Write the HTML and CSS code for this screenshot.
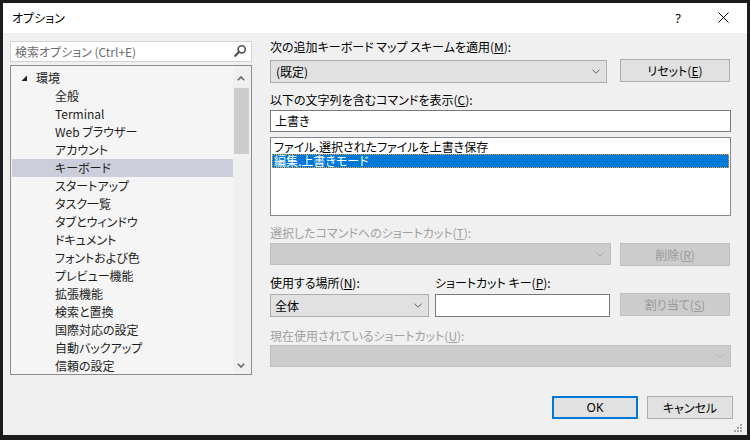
FILE: index.html
```html
<!DOCTYPE html>
<html lang="ja">
<head>
<meta charset="utf-8">
<title>オプション</title>
<link rel="stylesheet" href="styles.css">
</head>
<body>
<div class="window">
  <div class="titlebar">
    <span class="title">オプション</span>
    <span class="cap help">?</span>
    <span class="cap close">
      <svg width="11" height="11" viewBox="0 0 11 11"><path d="M0.5 0.5 L10.5 10.5 M10.5 0.5 L0.5 10.5" stroke="#000" stroke-width="1" fill="none"/></svg>
    </span>
  </div>
  <div class="content">
    <div class="left">
      <div class="search">
        <span class="placeholder">検索オプション (Ctrl+E)</span>
        <svg class="search-icon" width="14" height="14" viewBox="0 0 14 14">
          <circle cx="8.7" cy="5.3" r="3.6" stroke="#505050" stroke-width="1.6" fill="none"/>
          <path d="M6.2 7.8 L2.2 11.8" stroke="#505050" stroke-width="2.2" stroke-linecap="round"/>
        </svg>
      </div>
      <div class="tree">
        <div class="tree-items">
          <div class="row root">
            <svg class="expander" width="7" height="7" viewBox="0 0 7 7"><polygon points="6,0.5 6,6 0.5,6" fill="#1e1e1e"/></svg>
            <span>環境</span>
          </div>
          <div class="row child">全般</div>
          <div class="row child">Terminal</div>
          <div class="row child">Web ブラウザー</div>
          <div class="row child">アカウント</div>
          <div class="row child selected">キーボード</div>
          <div class="row child">スタートアップ</div>
          <div class="row child">タスク一覧</div>
          <div class="row child">タブとウィンドウ</div>
          <div class="row child">ドキュメント</div>
          <div class="row child">フォントおよび色</div>
          <div class="row child">プレビュー機能</div>
          <div class="row child">拡張機能</div>
          <div class="row child">検索と置換</div>
          <div class="row child">国際対応の設定</div>
          <div class="row child">自動バックアップ</div>
          <div class="row child">信頼の設定</div>
        </div>
        <div class="scrollbar">
          <div class="sb-btn sb-up">
            <svg width="8" height="5" viewBox="0 0 8 5"><path d="M0.8 4.2 L4 1 L7.2 4.2" stroke="#606060" stroke-width="1.5" fill="none"/></svg>
          </div>
          <div class="sb-thumb"></div>
          <div class="sb-track"></div>
          <div class="sb-btn sb-down">
            <svg width="8" height="5" viewBox="0 0 8 5"><path d="M0.8 0.8 L4 4 L7.2 0.8" stroke="#606060" stroke-width="1.5" fill="none"/></svg>
          </div>
        </div>
      </div>
    </div>

    <div class="right">
      <div class="label l1">次の追加キーボード マップ スキームを適用(<u>M</u>):</div>
      <div class="line r1">
        <div class="combo w337">
          <span>(既定)</span>
          <svg class="chev" width="8" height="5" viewBox="0 0 8 5"><path d="M0.5 0.8 L4 4.2 L7.5 0.8" stroke="#606060" stroke-width="1" fill="none"/></svg>
        </div>
        <div class="btn reset">リセット(<u>E</u>)</div>
      </div>

      <div class="label l2">以下の文字列を含むコマンドを表示(<u>C</u>):</div>
      <div class="textbox full">上書き</div>

      <div class="listbox">
        <div class="item">ファイル.選択されたファイルを上書き保存</div>
        <div class="item sel">編集.上書きモード</div>
      </div>

      <div class="label disabled l3">選択したコマンドへのショートカット(<u>T</u>):</div>
      <div class="line r3">
        <div class="combo dis w341">
          <span></span>
          <svg class="chev" width="8" height="5" viewBox="0 0 8 5"><path d="M0.5 0.8 L4 4.2 L7.5 0.8" stroke="#a8a8a8" stroke-width="1" fill="none"/></svg>
        </div>
        <div class="btn dis del">削除(<u>R</u>)</div>
      </div>

      <div class="labelrow">
        <div class="label lw">使用する場所(<u>N</u>):</div>
        <div class="label">ショートカット キー(<u>P</u>):</div>
      </div>
      <div class="line r4">
        <div class="combo w159">
          <span>全体</span>
          <svg class="chev" width="8" height="5" viewBox="0 0 8 5"><path d="M0.5 0.8 L4 4.2 L7.5 0.8" stroke="#606060" stroke-width="1" fill="none"/></svg>
        </div>
        <div class="textbox keybox"></div>
        <div class="btn dis assign">割り当て(<u>S</u>)</div>
      </div>

      <div class="label disabled l4">現在使用されているショートカット(<u>U</u>):</div>
      <div class="combo dis full w461">
        <span></span>
        <svg class="chev" width="8" height="5" viewBox="0 0 8 5"><path d="M0.5 0.8 L4 4.2 L7.5 0.8" stroke="#b4b4b4" stroke-width="1" fill="none"/></svg>
      </div>

      <div class="actions">
        <div class="btn ok">OK</div>
        <div class="btn cancel">キャンセル</div>
      </div>
    </div>
  </div>
  <svg class="grip" width="8" height="8" viewBox="0 0 8 8">
    <rect x="6" y="0" width="2" height="2" fill="#a6a6a6"/>
    <rect x="3" y="3" width="2" height="2" fill="#a6a6a6"/>
    <rect x="6" y="3" width="2" height="2" fill="#a6a6a6"/>
    <rect x="0" y="6" width="2" height="2" fill="#a6a6a6"/>
    <rect x="3" y="6" width="2" height="2" fill="#a6a6a6"/>
    <rect x="6" y="6" width="2" height="2" fill="#a6a6a6"/>
  </svg>
</div>
</body>
</html>
```

FILE: styles.css
```css
* {
  box-sizing: border-box;
}

html, body {
  margin: 0;
  padding: 0;
}

body {
  background: #1c1c1c;
  width: 750px;
  height: 440px;
  overflow: hidden;
  font-family: "Noto Sans CJK JP", "Noto Sans", sans-serif;
  font-size: 12px;
  font-feature-settings: "palt";
  color: #000;
}

u {
  text-decoration: underline;
  text-underline-offset: 1px;
}

.window {
  position: relative;
  margin: 3px 0 0 3px;
  width: 744px;
  height: 432px;
  background: #f0f0f0;
}

/* title bar */
.titlebar {
  height: 30px;
  background: #ffffff;
  display: flex;
  align-items: center;
  padding-left: 9px;
  padding-right: 1px;
}

.title {
  line-height: 14px;
  margin-top: -1px;
}

.cap {
  width: 46px;
  height: 30px;
  display: flex;
  align-items: center;
  justify-content: center;
}

.help {
  margin-left: auto;
  font-family: "Noto Sans", sans-serif;
  font-size: 13px;
  padding-left: 2px;
}

.close svg {
  display: block;
  margin-top: -2px;
}

/* content */
.content {
  display: flex;
  padding: 7px 14px 0 7px;
}

.left {
  width: 242px;
  padding-top: 1px;
  margin-right: 18px;
}

.search {
  height: 21px;
  background: #fff;
  border: 1px solid #d3d3d3;
  display: flex;
  align-items: center;
  padding-left: 4px;
  padding-right: 4px;
}

.placeholder {
  color: #6d6d6d;
  line-height: 14px;
  flex: 1;
}

.search-icon {
  display: block;
  margin-top: -1px;
}

.tree {
  margin-top: 3px;
  height: 310px;
  border: 1px solid #8c8c8c;
  background: #f5f5f5;
  display: flex;
}

.tree-items {
  flex: 1;
  padding: 3px 0 0 1px;
  overflow: hidden;
  color: #1e1e1e;
}

.row {
  height: 18px;
  line-height: 18px;
  white-space: nowrap;
}

.root {
  display: flex;
  align-items: center;
  padding-left: 9px;
}

.expander {
  display: block;
  margin-right: 8px;
  margin-top: 1px;
}

.child {
  padding-left: 43px;
}

.selected {
  background: #cccedb;
}

.scrollbar {
  width: 18px;
  display: flex;
  flex-direction: column;
  background: #f0f0f0;
}

.sb-btn {
  display: flex;
  align-items: center;
  justify-content: center;
  padding-right: 2px;
}

.sb-up {
  height: 22px;
  padding-top: 3px;
}

.sb-thumb {
  height: 66px;
  width: 15px;
  margin-left: 1px;
  background: #cdcdcd;
}

.sb-track {
  flex: 1;
}

.sb-down {
  height: 18px;
}

/* right pane */
.right {
  width: 463px;
  display: flex;
  flex-direction: column;
}

.label {
  line-height: 14px;
  height: 14px;
  white-space: nowrap;
}

.label.disabled {
  color: #a0a0a0;
}

.l2 { margin-top: 10px; }
.l3 { margin-top: 10px; }
.l4 { margin-top: 12px; }

.line {
  display: flex;
  align-items: flex-start;
}

.r1 {
  margin-top: 6px;
  height: 23px;
}

.r3 {
  margin-top: 3px;
  height: 23px;
}

.r4 {
  margin-top: 3px;
  height: 24px;
}

.labelrow {
  display: flex;
  margin-top: 10px;
}

.lw {
  width: 165px;
}

.combo {
  height: 23px;
  background: #e1e1e1;
  border: 1px solid #adadad;
  display: flex;
  align-items: center;
  padding-left: 5px;
  padding-right: 6px;
  line-height: 14px;
}

.combo span {
  flex: 1;
}

.combo .chev {
  display: block;
}

.combo.dis {
  background: #cccccc;
  border-color: #bfbfbf;
  height: 22px;
}

.w337 { width: 337px; }
.w341 { width: 341px; }
.w159 { width: 159px; margin-top: 1px; padding-left: 4px; }
.w461 { width: 461px; margin-top: 2px; }

.btn {
  height: 23px;
  width: 110px;
  background: #e1e1e1;
  border: 1px solid #adadad;
  display: flex;
  align-items: center;
  justify-content: center;
  line-height: 14px;
}

.btn.dis {
  background: #cccccc;
  border-color: #bfbfbf;
  color: #9a9a9a;
}

.reset {
  margin-left: 13px;
  margin-top: -1px;
}

.del {
  margin-left: 9px;
}

.assign {
  margin-left: 10px;
}

.textbox {
  background: #fff;
  border: 1px solid #7a7a7a;
  line-height: 14px;
  padding-left: 4px;
  display: flex;
  align-items: center;
}

.textbox.full {
  width: 461px;
  height: 22px;
  margin-top: 3px;
}

.keybox {
  width: 175px;
  height: 23px;
  margin-left: 6px;
  margin-top: 1px;
}

.listbox {
  width: 461px;
  height: 79px;
  margin-top: 5px;
  background: #fff;
  border: 1px solid #828790;
  padding: 2px 1px 0 1px;
}

.item {
  height: 14px;
  line-height: 14px;
  padding-left: 2px;
  white-space: nowrap;
}

.item.sel {
  background: #0078d7;
  color: #fff;
  outline: 1px dotted #f0a030;
  outline-offset: -1px;
}

.actions {
  display: flex;
  justify-content: flex-end;
  margin-top: 29px;
}

.ok {
  width: 86px;
  border: 2px solid #0078d7;
  font-family: "Noto Sans", "Noto Sans CJK JP", sans-serif;
}

.cancel {
  width: 86px;
  margin-left: 9px;
}

.grip {
  position: absolute;
  right: 5px;
  bottom: 3px;
  display: block;
}
```
